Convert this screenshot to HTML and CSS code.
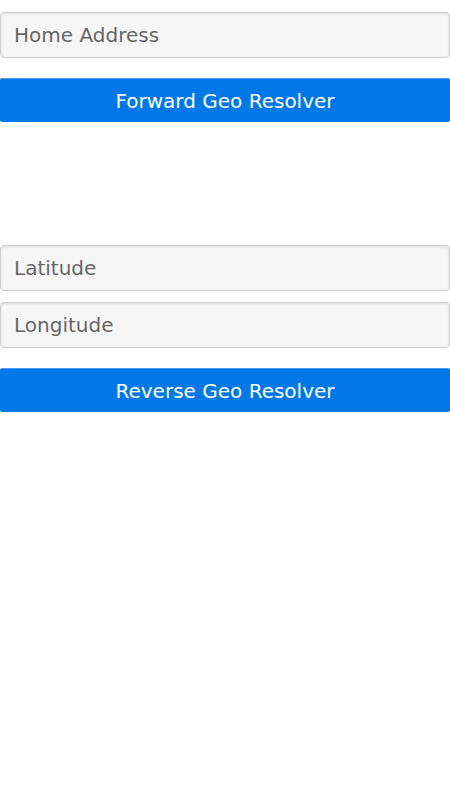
FILE: index.html
```html
<!DOCTYPE html>
<html>
<head>
<meta charset="utf-8">
<link rel="stylesheet" href="styles.css">
</head>
<body>
<div class="page">
  <form class="block block-forward">
    <input class="field" type="text" placeholder="Home Address">
    <button class="btn" type="button">Forward Geo Resolver</button>
  </form>
  <form class="block block-reverse">
    <input class="field" type="text" placeholder="Latitude">
    <input class="field" type="text" placeholder="Longitude">
    <button class="btn" type="button">Reverse Geo Resolver</button>
  </form>
</div>
</body>
</html>
```

FILE: styles.css
```css
html, body {
  margin: 0;
  padding: 0;
  background: #ffffff;
  font-family: "DejaVu Sans", sans-serif;
}
.page {
  display: flex;
  flex-direction: column;
  padding-top: 12px;
}
.block {
  display: flex;
  flex-direction: column;
  margin: 0;
}
.block-reverse {
  margin-top: 123px;
}
.field {
  box-sizing: border-box;
  width: 450px;
  height: 46px;
  margin: 0 0 11px 0;
  padding: 0 13px;
  border: 1px solid #cccccc;
  border-radius: 4px;
  background: #f6f6f6;
  box-shadow: inset 0 1px 3px #dddddd;
  font-family: "DejaVu Sans", sans-serif;
  font-size: 20px;
  color: #555555;
  outline: none;
}
.field::placeholder {
  color: #666666;
  opacity: 1;
}
.block .field:last-of-type {
  margin-bottom: 20px;
}
.btn {
  box-sizing: border-box;
  width: 450px;
  height: 44px;
  margin: 0;
  padding: 0;
  border: none;
  border-top: 1px solid #4d9af0;
  border-radius: 2px;
  background: #0078e7;
  color: #ffffff;
  font-family: "DejaVu Sans", sans-serif;
  font-size: 20px;
  cursor: pointer;
}
```
